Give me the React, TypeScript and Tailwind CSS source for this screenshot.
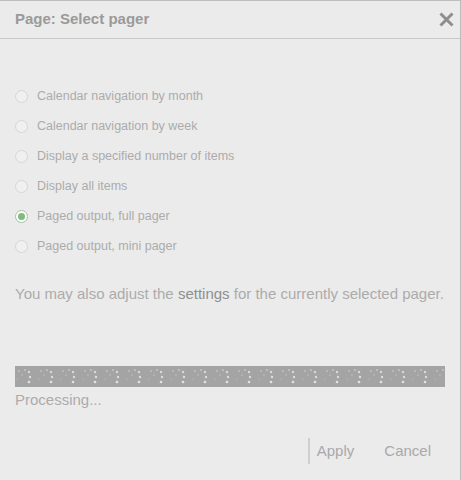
import React from "react";

const options = [
  "Calendar navigation by month",
  "Calendar navigation by week",
  "Display a specified number of items",
  "Display all items",
  "Paged output, full pager",
  "Paged output, mini pager",
];

function Radio({ checked }: { checked: boolean }) {
  return (
    <span
      className={
        "flex h-[13px] w-[13px] shrink-0 items-center justify-center rounded-full border " +
        (checked ? "border-[#9cc79c] bg-white" : "border-[#d6d6d6] bg-[#f0f0f0]")
      }
    >
      {checked && <span className="h-[7px] w-[7px] rounded-full bg-[#7fba7f]" />}
    </span>
  );
}

function ProgressBar() {
  return (
    <svg className="block h-[21px] w-full" preserveAspectRatio="none">
      <defs>
        <pattern id="dots" width="22" height="21" patternUnits="userSpaceOnUse">
          <rect width="22" height="21" fill="#a4a4a4" />
          <circle cx="4" cy="5" r="1" fill="#c0c0c0" />
          <circle cx="10" cy="4" r="1" fill="#c6c6c6" />
          <circle cx="14" cy="6" r="1.2" fill="#d8d8d8" />
          <circle cx="7" cy="9" r="0.9" fill="#b6b6b6" />
          <circle cx="15" cy="11" r="1.2" fill="#dcdcdc" />
          <circle cx="2" cy="13" r="0.8" fill="#b4b4b4" />
          <circle cx="14" cy="16" r="1.3" fill="#e2e2e2" />
        </pattern>
      </defs>
      <rect width="100%" height="100%" fill="url(#dots)" />
    </svg>
  );
}

export default function App() {
  return (
    <div
      className="h-[480px] w-[461px] border-t border-r border-[#bdbdbd] bg-[#ebebeb] text-[#a8a8a8]"
      style={{ fontFamily: '"Liberation Sans", Arial, sans-serif' }}
    >
      {/* header */}
      <div className="flex h-[38px] items-center justify-between border-b border-[#c8c8c8] pl-[15px] pr-[6px]">
        <h1 className="text-[15px] font-bold text-[#9a9a9a]">Page: Select pager</h1>
        <svg width="15" height="15" viewBox="0 0 15 15" className="text-[#8e8e8e]">
          <path d="M1.5 1.5 L13.5 13.5 M13.5 1.5 L1.5 13.5" stroke="currentColor" strokeWidth="3" />
        </svg>
      </div>

      <div className="px-[15px] pt-[42px]">
        <div className="flex flex-col">
          {options.map((o, i) => (
            <label key={o} className="flex h-[30px] items-center gap-[9px] text-[12.5px] text-[#ababab]">
              <Radio checked={i === 4} />
              <span>{o}</span>
            </label>
          ))}
        </div>

        <p className="mt-[22px] text-[15px] text-[#ababab]">
          You may also adjust the <span className="text-[#8f8f8f]">settings</span> for the currently selected pager.
        </p>

        <div className="mt-[60px]">
          <ProgressBar />
          <div className="mt-[2px] text-[15px] text-[#acacac]">Processing...</div>
        </div>

        <div className="mt-[27px] flex items-center justify-end pr-[14px]">
          <span className="mr-[7px] h-[26px] w-[2px] bg-[#cfcfcf]" />
          <span className="text-[15px] text-[#a9a9a9]">Apply</span>
          <span className="ml-[30px] text-[15px] text-[#a9a9a9]">Cancel</span>
        </div>
      </div>
    </div>
  );
}
